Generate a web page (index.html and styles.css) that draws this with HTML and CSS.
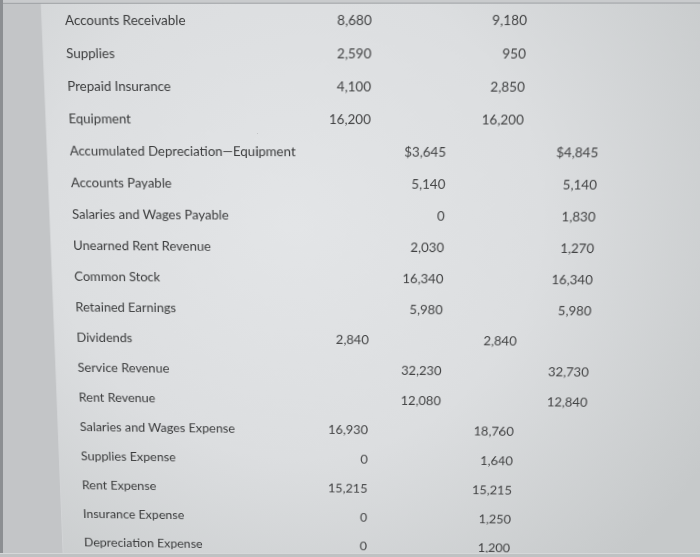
FILE: index.html
```html
<!DOCTYPE html>
<html lang="en">
<head>
<meta charset="utf-8">
<title>Trial Balance</title>
<link rel="stylesheet" href="styles.css">
</head>
<body>
<div class="photo">
  <div class="viewport">
    <div class="bezel"></div>
    <div class="stage">
      <div class="sheet">
        <div class="topbar"></div>
        <div class="content">
          <div class="sidebar"></div>
          <div class="main">
            <div class="row"><span class="label">Accounts Receivable</span><span class="num">8,680</span><span class="num"></span><span class="num">9,180</span><span class="num"></span></div>
            <div class="row"><span class="label">Supplies</span><span class="num">2,590</span><span class="num"></span><span class="num">950</span><span class="num"></span></div>
            <div class="row"><span class="label">Prepaid Insurance</span><span class="num">4,100</span><span class="num"></span><span class="num">2,850</span><span class="num"></span></div>
            <div class="row"><span class="label">Equipment</span><span class="num">16,200</span><span class="num"></span><span class="num">16,200</span><span class="num"></span></div>
            <div class="row"><span class="label">Accumulated Depreciation—Equipment</span><span class="num"></span><span class="num">$3,645</span><span class="num"></span><span class="num">$4,845</span></div>
            <div class="row"><span class="label">Accounts Payable</span><span class="num"></span><span class="num">5,140</span><span class="num"></span><span class="num">5,140</span></div>
            <div class="row"><span class="label">Salaries and Wages Payable</span><span class="num"></span><span class="num">0</span><span class="num"></span><span class="num">1,830</span></div>
            <div class="row"><span class="label">Unearned Rent Revenue</span><span class="num"></span><span class="num">2,030</span><span class="num"></span><span class="num">1,270</span></div>
            <div class="row"><span class="label">Common Stock</span><span class="num"></span><span class="num">16,340</span><span class="num"></span><span class="num">16,340</span></div>
            <div class="row"><span class="label">Retained Earnings</span><span class="num"></span><span class="num">5,980</span><span class="num"></span><span class="num">5,980</span></div>
            <div class="row"><span class="label">Dividends</span><span class="num">2,840</span><span class="num"></span><span class="num">2,840</span><span class="num"></span></div>
            <div class="row"><span class="label">Service Revenue</span><span class="num"></span><span class="num">32,230</span><span class="num"></span><span class="num">32,730</span></div>
            <div class="row"><span class="label">Rent Revenue</span><span class="num"></span><span class="num">12,080</span><span class="num"></span><span class="num">12,840</span></div>
            <div class="row"><span class="label">Salaries and Wages Expense</span><span class="num">16,930</span><span class="num"></span><span class="num">18,760</span><span class="num"></span></div>
            <div class="row"><span class="label">Supplies Expense</span><span class="num">0</span><span class="num"></span><span class="num">1,640</span><span class="num"></span></div>
            <div class="row"><span class="label">Rent Expense</span><span class="num">15,215</span><span class="num"></span><span class="num">15,215</span><span class="num"></span></div>
            <div class="row"><span class="label">Insurance Expense</span><span class="num">0</span><span class="num"></span><span class="num">1,250</span><span class="num"></span></div>
            <div class="row"><span class="label">Depreciation Expense</span><span class="num">0</span><span class="num"></span><span class="num">1,200</span><span class="num"></span></div>
          </div>
        </div>
      </div>
    </div>
  </div>
  <div class="bottom-edge"></div>
</div>
</body>
</html>
```
FILE: styles.css
```css
html, body {
  margin: 0;
  padding: 0;
  width: 700px;
  height: 557px;
  overflow: hidden;
  background: #c2c4c6;
}

.photo {
  display: flex;
  flex-direction: column;
  width: 700px;
  height: 557px;
}

.viewport {
  display: flex;
  height: 553px;
  overflow: hidden;
}

.bezel {
  width: 3px;
  flex: none;
  background: #8c8f92;
}

.stage {
  flex: 1;
  overflow: hidden;
  background: #c3c5c7;
}

.sheet {
  width: 760px;
  height: 640px;
  display: flex;
  flex-direction: column;
  transform-origin: -3px 0;
  transform: matrix3d(0.985948, -0.000533, 0, -0.000026662,
                      0.046448, 1.011653, 0, 0.000149762,
                      0, 0, 1, 0,
                      -0.0156, -0.1984, 0, 0.998738);
}

.topbar {
  height: 3px;
  background: #c9cbcd;
  border-bottom: 1px solid #9ea1a4;
  flex: none;
}

.content {
  flex: 1;
  display: flex;
}

.sidebar {
  width: 38px;
  flex: none;
  background: #c3c5c7;
  border-right: 1px solid #d2d4d6;
  box-shadow: 1px 0 0 #b0b3b5;
}

.main {
  flex: 1;
  padding-left: 23px;
  background: radial-gradient(ellipse 70% 80% at 35% 35%, #e3e5e7 0%, #dcdee0 50%, #c6c9ca 100%);
  font-family: Lato, "Noto Sans", sans-serif;
  font-size: 13.5px;
  color: #3b3c3d;
}

.row {
  display: grid;
  grid-template-columns: 235px 73px 76.5px 77.5px 76px;
  height: 33px;
  line-height: 33px;
}

.label {
  white-space: nowrap;
}

.num {
  text-align: right;
  white-space: nowrap;
  color: #424344;
}

.bottom-edge {
  height: 4px;
  flex: none;
  background: #bfc2c3;
  border-top: 1px solid #d6d8d9;
  box-sizing: border-box;
}
```
